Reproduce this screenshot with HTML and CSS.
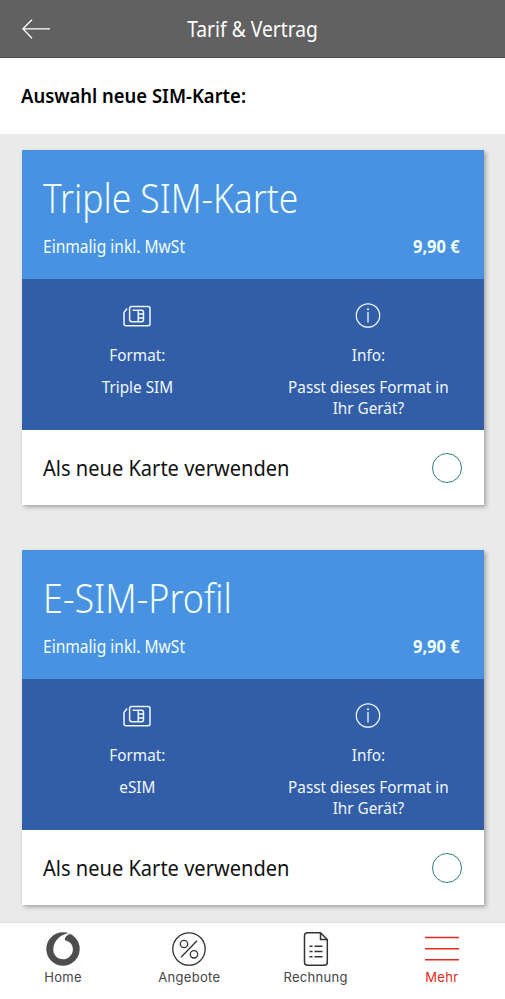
FILE: index.html
```html
<!DOCTYPE html>
<html lang="de">
<head>
<meta charset="utf-8">
<meta name="viewport" content="width=device-width, initial-scale=1">
<title>Tarif &amp; Vertrag</title>
<link rel="stylesheet" href="styles.css">
</head>
<body>
<svg class="symbols" width="0" height="0" aria-hidden="true">
  <symbol id="sim" viewBox="0 0 30 24"><g fill="none" stroke="currentColor" stroke-width="1.5" stroke-linejoin="round" stroke-linecap="round"><path d="M4.700 5 2 8.500v11.200q0 2 2 2h22q2 0 2-2V4.500q0-2-2-2H9.600q-2 0-2 2v10.800q0 2.500 2.500 2.500h9.400q2 0 2-2V8.200q0-2-2-2H11.200M16.300 6.500v11M16.300 10h5M16.300 13.900h5"/></g></symbol>
  <symbol id="info" viewBox="0 0 26 26"><g fill="none" stroke="currentColor" stroke-width="1.3" stroke-linecap="round"><circle cx="13" cy="12.500" r="11.700"/><path d="M13 9.500V19"/></g><circle cx="13" cy="6.200" r="1" fill="currentColor"/></symbol>
</svg>
<div class="app">
  <header class="topbar">
    <svg class="back" viewBox="0 0 28 20"><path d="M10 .7.9 9.800 10 19.200M1 9.800h27" fill="none" stroke="currentColor" stroke-width="1.300"/></svg>
    <h1>Tarif &amp; Vertrag</h1>
  </header>
  <div class="intro"><h2>Auswahl neue SIM-Karte:</h2></div>
  <main>
    <section class="card">
      <div class="head">
        <h3 class="triple">Triple SIM-Karte</h3>
        <div class="price"><span class="once">Einmalig inkl. MwSt</span><b>9,90 €</b></div>
      </div>
      <div class="details">
        <div class="col"><svg class="icon sim"><use href="#sim"/></svg><p>Format:</p><p>Triple SIM</p></div>
        <div class="col"><svg class="icon"><use href="#info"/></svg><p>Info:</p><p>Passt dieses Format in<br>Ihr Gerät?</p></div>
      </div>
      <label class="choice"><span>Als neue Karte verwenden</span><i class="radio"></i></label>
    </section>
    <section class="card">
      <div class="head">
        <h3 class="esim">E-SIM-Profil</h3>
        <div class="price"><span class="once">Einmalig inkl. MwSt</span><b>9,90 €</b></div>
      </div>
      <div class="details">
        <div class="col"><svg class="icon sim"><use href="#sim"/></svg><p>Format:</p><p>eSIM</p></div>
        <div class="col"><svg class="icon"><use href="#info"/></svg><p>Info:</p><p>Passt dieses Format in<br>Ihr Gerät?</p></div>
      </div>
      <label class="choice"><span>Als neue Karte verwenden</span><i class="radio"></i></label>
    </section>
  </main>
  <nav class="tabs">
    <a class="tab"><svg viewBox="0 0 34 34"><circle cx="17" cy="17" r="16.700" fill="#4d4d4d"/><path d="M23.500 1C14 2 7.300 9.500 7.300 17.500c0 5.600 4.200 9.800 9.700 9.800s9.900-4.600 9.900-10.100c0-4.800-3.400-8-8.100-9C18.700 5 20.800 3 23.800 2.200z" fill="#fff"/></svg><span>Home</span></a>
    <a class="tab"><svg viewBox="0 0 34 34"><g fill="none" stroke="#333" stroke-width="1.300"><circle cx="17" cy="17" r="16.200"/><circle cx="12" cy="12" r="3.700"/><circle cx="22" cy="22.300" r="3.700"/><path d="M25 8.800 9 25.200"/></g></svg><span>Angebote</span></a>
    <a class="tab"><svg viewBox="0 0 34 34"><g fill="none" stroke="#333" stroke-width="1.500" stroke-linejoin="round"><path d="M21.500.8H8.500q-3 0-3 3v26.400q0 3 3 3h16.800q3 0 3-3V7.500zM21.500.8v6.700h6.800"/><path d="M10.500 14.300h3m2 0h8m-13 5.200h3m2 0h8m-13 5.200h3m2 0h8"/></g></svg><span>Rechnung</span></a>
    <a class="tab active"><svg viewBox="0 0 34 34"><path d="M0 5.500h34M0 16.700h34M0 27.700h34" stroke="currentColor" stroke-width="1.500"/></svg><span>Mehr</span></a>
  </nav>
</div>
</body>
</html>
```
FILE: styles.css
```css
* { box-sizing: border-box; }
body { margin: 0; background: #eaeaea; font-family: "Noto Sans", "Open Sans", sans-serif; }
h1, h2, h3, p { margin: 0; }
.symbols { display: block; height: 0; }
.app { height: 999px; display: flex; flex-direction: column; overflow: hidden; }
.topbar { height: 58px; flex: none; display: grid; grid-template-columns: 50px 1fr 50px; align-items: center; background: #616161; border-bottom: 1px solid #4f4f4f; color: #fff; }
.back { width: 28px; height: 20px; margin-left: 22px; }
h1 { font-size: 21.500px; font-weight: 400; line-height: 30px; text-align: center; white-space: nowrap; transform: scaleX(.895); }
.intro { height: 76px; flex: none; background: #fff; padding: 23px 21px; }
h2 { font-size: 19px; font-weight: 600; line-height: 30px; white-space: nowrap; transform: scaleX(.97); transform-origin: left; }
main { flex: 1; min-height: 0; padding: 16px 21.500px 0 22px; }
.card { height: 355px; margin-bottom: 45px; background: #fff; box-shadow: 2px 2px 4px rgba(0,0,0,.3); }
.head { height: 129px; padding: 22px 24px 0 21px; background: #4991e1; color: #f0ffff; }
h3 { font-size: 41px; line-height: 50px; font-weight: 300; white-space: nowrap; transform-origin: left; }
.triple { transform: scaleX(.863); }
.esim { transform: scaleX(.877); }
.price { display: flex; justify-content: space-between; margin-top: 12px; font-size: 17.500px; line-height: 24px; font-weight: 400; white-space: nowrap; }
.once { transform: scaleX(.89); transform-origin: left; }
.price b { font-weight: 700; transform: scaleX(.94); transform-origin: right; }
.details { height: 151px; display: grid; grid-template-columns: 1fr 1fr; padding-top: 24px; background: #325da7; color: #eff8ff; text-align: center; font-size: 17px; line-height: 21px; white-space: nowrap; }
.icon { display: block; width: 26px; height: 26px; margin: 0 auto 15px; }
.icon.sim { width: 30px; }
.col p { transform: scaleX(.9); }
.col p + p { margin-top: 11px; }
.choice { height: 75px; display: flex; justify-content: space-between; align-items: center; padding: 0 22px 0 21px; font-size: 21px; font-weight: 400; color: #111; white-space: nowrap; }
.choice span { transform: scaleX(.955); transform-origin: left; }
.radio { width: 30px; height: 30px; border: 1.500px solid #287e8e; border-radius: 50%; }
.tabs { height: 77px; flex: none; display: grid; grid-template-columns: repeat(4, 1fr); background: #fff; border-top: 1px solid #ddd; font-family: Inter, sans-serif; }
.tab { display: flex; flex-direction: column; align-items: center; padding-top: 9px; color: #444; font-size: 13px; line-height: 18px; letter-spacing: .3px; }
.tab svg { width: 34px; height: 34px; margin-bottom: 2px; }
.tab.active { color: #e6281e; }
```
